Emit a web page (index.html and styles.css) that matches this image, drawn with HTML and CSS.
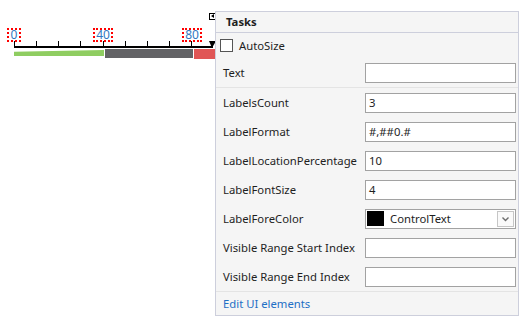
FILE: index.html
```html
<!DOCTYPE html>
<html lang="en">

<head>
    <meta charset="UTF-8" />
    <meta name="viewport" content="width=device-width, initial-scale=1.0" />
    <title>Gauge Tasks</title>
    <link rel="stylesheet" href="styles.css">
</head>

<body>
    <div class="stage">
        <div class="ruler">
            <span class="ruler-label label-0">0</span>
            <span class="ruler-label label-40">40</span>
            <span class="ruler-label label-80">80</span>
            <div class="ticks">
                <span></span><span></span><span></span><span></span><span></span>
                <span></span><span></span><span></span><span></span>
            </div>
            <div class="bars">
                <div class="bar bar-green"></div>
                <div class="bar bar-gray"></div>
                <div class="bar bar-red"></div>
            </div>
            <span class="tag-glyph"></span>
            <span class="tag-arrow"></span>
        </div>

        <div class="tasks">
            <div class="tasks-title">Tasks</div>
            <label class="check-row">
                <span class="check-box"></span>
                <span>AutoSize</span>
            </label>
            <div class="prop-row prop-row-split">
                <span class="prop-name">Text</span>
                <div class="prop-input"></div>
            </div>
            <div class="prop-row">
                <span class="prop-name">LabelsCount</span>
                <div class="prop-input">3</div>
            </div>
            <div class="prop-row">
                <span class="prop-name">LabelFormat</span>
                <div class="prop-input">#,##0.#</div>
            </div>
            <div class="prop-row">
                <span class="prop-name">LabelLocationPercentage</span>
                <div class="prop-input">10</div>
            </div>
            <div class="prop-row">
                <span class="prop-name">LabelFontSize</span>
                <div class="prop-input">4</div>
            </div>
            <div class="prop-row">
                <span class="prop-name">LabelForeColor</span>
                <div class="prop-input prop-select">
                    <span class="swatch"></span>
                    <span class="select-text">ControlText</span>
                    <span class="select-button">
                        <svg width="9" height="6" viewBox="0 0 9 6">
                            <polyline points="1.5,1.5 4.5,4.5 7.5,1.5" fill="none" stroke="#6d6d6d" stroke-width="1.4" />
                        </svg>
                    </span>
                </div>
            </div>
            <div class="prop-row">
                <span class="prop-name">Visible Range Start Index</span>
                <div class="prop-input"></div>
            </div>
            <div class="prop-row">
                <span class="prop-name">Visible Range End Index</span>
                <div class="prop-input"></div>
            </div>
            <div class="tasks-footer">
                <a class="tasks-link">Edit UI elements</a>
            </div>
        </div>
    </div>
</body>

</html>
```

FILE: styles.css
```css
body,
html {
    margin: 0;
    padding: 0;
    background-color: #ffffff;
    font-family: "Noto Sans", "Open Sans", sans-serif;
    font-size: 11.3px;
    color: #1e1e1e;
}

.stage {
    display: flex;
    align-items: flex-start;
}

/* gauge preview */
.ruler {
    position: relative;
    width: 201px;
    padding: 41px 0 0 14px;
}

.ruler-label {
    position: absolute;
    top: 28px;
    height: 10px;
    padding: 0 1px;
    border: 2px dotted #ff0000;
    font-size: 12px;
    line-height: 10px;
    color: #2f78c2;
    text-align: center;
}

.label-0 {
    left: 7px;
    width: 8px;
}

.label-40 {
    left: 93px;
    width: 14px;
}

.label-80 {
    left: 182px;
    width: 14px;
}

.ticks {
    display: flex;
    height: 5px;
    width: 199px;
    border-bottom: 2px solid #000;
}

.ticks span {
    flex: 0 0 22.125px;
    box-sizing: border-box;
    border-left: 1px solid #000;
}

.bars {
    display: flex;
    align-items: flex-start;
    gap: 1px;
    margin-top: 1px;
}

.bar {
    flex: none;
}

.bar-green {
    width: 90px;
    height: 6px;
    margin-top: 1px;
    background-color: #8fcd61;
    clip-path: polygon(0 30%, 100% 0, 100% 100%, 0 100%);
}

.bar-gray {
    width: 88px;
    height: 9px;
    background-color: #636366;
}

.bar-red {
    width: 22px;
    height: 10px;
    background-color: #e05656;
}

.tag-glyph {
    position: absolute;
    left: 209px;
    top: 13px;
    width: 6px;
    height: 5px;
    border: 1px solid #000;
    background-color: #fff;
}

.tag-glyph::after {
    content: "";
    position: absolute;
    left: 1px;
    top: 0;
    border-top: 2.5px solid transparent;
    border-bottom: 2.5px solid transparent;
    border-right: 3px solid #000;
}

.tag-arrow {
    position: absolute;
    left: 209px;
    top: 41px;
    border-left: 3px solid transparent;
    border-right: 4px solid transparent;
    border-top: 7px solid #000;
}

/* smart tag panel */
.tasks {
    position: relative;
    z-index: 1;
    width: 302px;
    margin-top: 11px;
    border: 1px solid #cdcfdc;
    background-color: #f5f5f5;
}

.tasks-title {
    height: 20px;
    line-height: 20px;
    padding-left: 10px;
    font-weight: bold;
    border-bottom: 1px solid #cdcfdc;
}

.check-row {
    display: flex;
    align-items: center;
    gap: 6px;
    height: 25px;
    padding-left: 4px;
}

.check-box {
    width: 11px;
    height: 11px;
    border: 1px solid #555;
    background-color: #fff;
}

.prop-row {
    display: flex;
    align-items: center;
    height: 29px;
    padding: 0 2px 0 7px;
}

.prop-row-split {
    border-bottom: 1px solid #e4e4e4;
}

.prop-name {
    flex: 1;
}

.prop-input {
    display: flex;
    align-items: center;
    box-sizing: border-box;
    width: 151px;
    height: 20px;
    padding-left: 3px;
    border: 1px solid #a2a2a2;
    background-color: #fff;
}

.prop-select {
    padding-left: 1px;
}

.swatch {
    width: 17px;
    height: 15px;
    background-color: #000;
}

.select-text {
    flex: 1;
    margin-left: 6px;
}

.select-button {
    display: flex;
    align-items: center;
    justify-content: center;
    box-sizing: border-box;
    width: 17px;
    height: 16px;
    margin-right: 1px;
    border: 1px solid #c6c6c6;
    background-color: #fafafa;
}

.tasks-footer {
    height: 23px;
    line-height: 23px;
    padding-left: 7px;
    border-top: 1px solid #e4e4e4;
}

.tasks-link {
    color: #1e6fc5;
    cursor: pointer;
}
```
